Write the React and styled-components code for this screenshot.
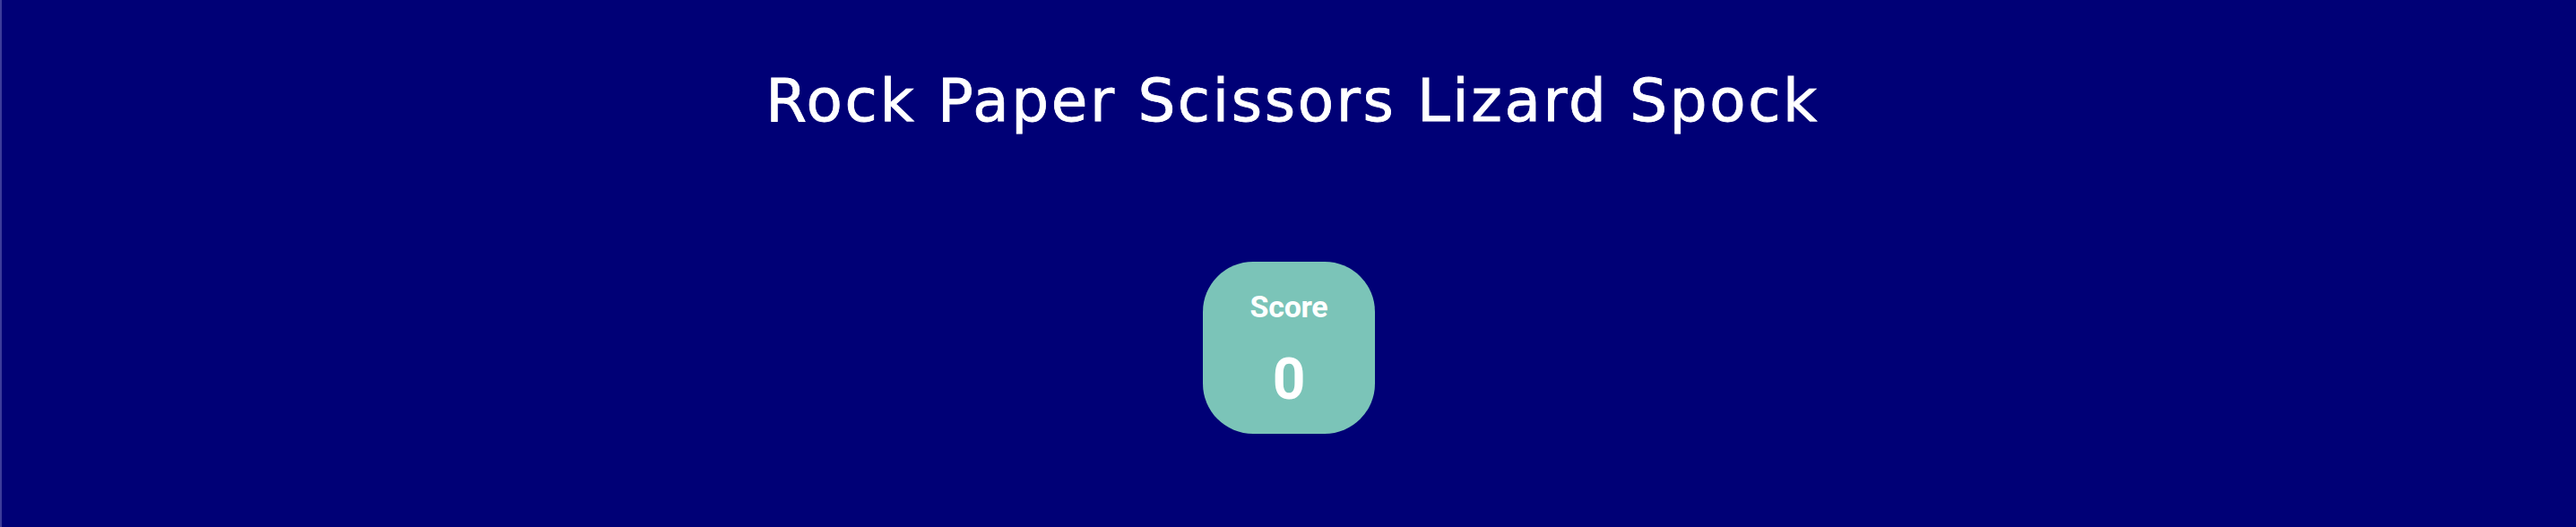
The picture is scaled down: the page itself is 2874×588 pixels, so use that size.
import styled, { createGlobalStyle } from "styled-components";

const GlobalStyle = createGlobalStyle`
    html, body {
        margin: 0;
        padding: 0;
        background-color: #000076;
    }

    #root {
        min-height: 588px;
    }
`;

const Page = styled.main`
    display: flex;
    flex-direction: column;
    align-items: center;
    min-height: 588px;
    box-sizing: border-box;
    border-left: 2px solid #3c3c9a;
    background-color: #000076;
    padding-top: 75px;
`;

const Title = styled.h1`
    margin: 0;
    padding-left: 8px;
    color: #fff;
    font-family: "DejaVu Sans", "Open Sans", sans-serif;
    font-weight: 400;
    font-size: 66px;
    line-height: 76px;
    letter-spacing: 2.6px;
    -webkit-text-stroke: 0.8px #fff;
`;

const ScoreBoard = styled.div`
    display: flex;
    flex-direction: column;
    align-items: center;
    width: 192px;
    height: 192px;
    box-sizing: border-box;
    margin-top: 141px;
    padding-top: 30px;
    border-radius: 56px;
    background-color: #7bc4b8;
    color: #fff;
    font-family: Roboto, "Liberation Sans", sans-serif;
    font-weight: 700;
`;

const Label = styled.span`
    font-size: 34px;
    line-height: 40px;
    letter-spacing: -0.3px;
`;

const Value = styled.span`
    font-size: 64px;
    line-height: 72px;
    margin-top: 26px;
`;

const App = () => {
    const score = 0;

    return (
        <>
            <GlobalStyle />
            <Page>
                <Title>Rock Paper Scissors Lizard Spock</Title>
                <ScoreBoard>
                    <Label>Score</Label>
                    <Value>{score}</Value>
                </ScoreBoard>
            </Page>
        </>
    );
};

export default App;
